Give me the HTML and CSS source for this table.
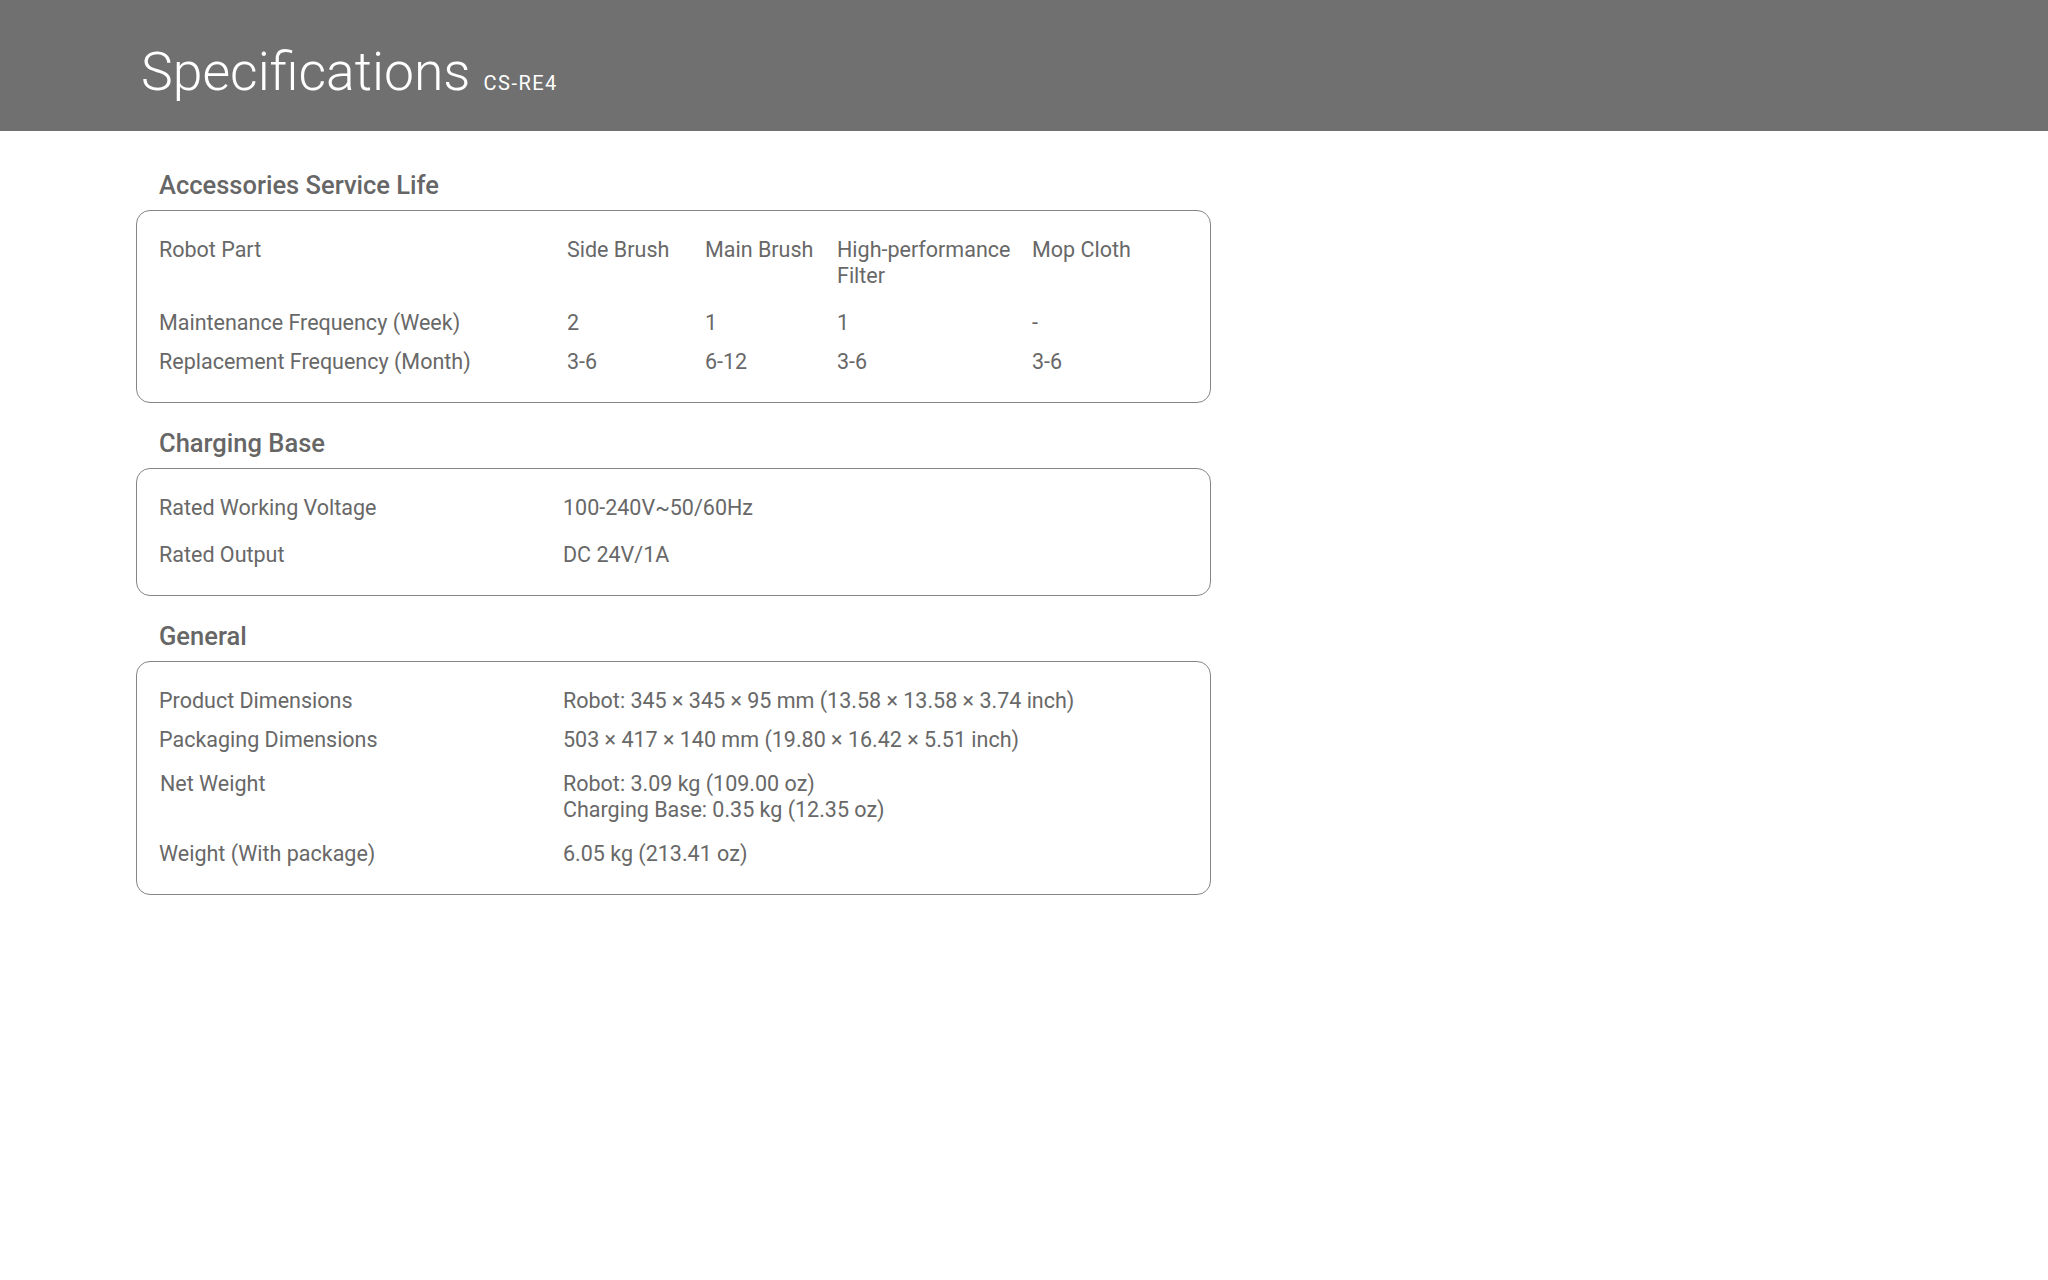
FILE: index.html
```html
<!DOCTYPE html>
<html>
<head>
    <title>Specifications</title>
    <link rel="stylesheet" href="styles.css">
</head>
<body>
    <div class="page-header">
        <h1>Specifications <span class="model">CS-RE4</span></h1>
    </div>
    <div class="container">
        <div class="spec-section">
            <h2>Accessories Service Life</h2>
            <div class="spec-box">
                <div class="life-row">
                    <span>Robot Part</span>
                    <span>Side Brush</span>
                    <span>Main Brush</span>
                    <span>High-performance Filter</span>
                    <span>Mop Cloth</span>
                </div>
                <div class="life-row loose">
                    <span>Maintenance Frequency (Week)</span>
                    <span>2</span>
                    <span>1</span>
                    <span>1</span>
                    <span>-</span>
                </div>
                <div class="life-row tight">
                    <span>Replacement Frequency (Month)</span>
                    <span>3-6</span>
                    <span>6-12</span>
                    <span>3-6</span>
                    <span>3-6</span>
                </div>
            </div>
        </div>

        <div class="spec-section">
            <h2>Charging Base</h2>
            <div class="spec-box">
                <div class="spec-row">
                    <span>Rated Working Voltage</span>
                    <span>100-240V~50/60Hz</span>
                </div>
                <div class="spec-row loose">
                    <span>Rated Output</span>
                    <span>DC 24V/1A</span>
                </div>
            </div>
        </div>

        <div class="spec-section">
            <h2>General</h2>
            <div class="spec-box">
                <div class="spec-row">
                    <span>Product Dimensions</span>
                    <span>Robot: 345 × 345 × 95 mm (13.58 × 13.58 × 3.74 inch)</span>
                </div>
                <div class="spec-row tight">
                    <span>Packaging Dimensions</span>
                    <span>503 × 417 × 140 mm (19.80 × 16.42 × 5.51 inch)</span>
                </div>
                <div class="spec-row">
                    <span class="nudge">Net Weight</span>
                    <span>Robot: 3.09 kg (109.00 oz)<br>Charging Base: 0.35 kg (12.35 oz)</span>
                </div>
                <div class="spec-row">
                    <span>Weight (With package)</span>
                    <span>6.05 kg (213.41 oz)</span>
                </div>
            </div>
        </div>
    </div>
</body>
</html>
```

FILE: styles.css
```css
html,
body {
    margin: 0;
    padding: 0;
}

body {
    background-color: #fff;
    color: #686868;
    font-family: Roboto, "Liberation Sans", sans-serif;
}

.page-header {
    background-color: #707070;
    height: 131px;
    box-sizing: border-box;
    padding: 46px 0 0 141px;
}

.page-header h1 {
    margin: 0;
    color: #fff;
    font-size: 53.5px;
    font-weight: 300;
    line-height: 52px;
}

.page-header .model {
    font-size: 20px;
    font-weight: 400;
    letter-spacing: 1.5px;
}

.container {
    width: 1075px;
    padding: 42px 0 0 136px;
}

.spec-section + .spec-section {
    margin-top: 28px;
}

.spec-section h2 {
    margin: 0 0 12px;
    padding-left: 23px;
    font-size: 25.5px;
    font-weight: 500;
    line-height: 25px;
    color: #666;
}

.spec-box {
    border: 1px solid #858585;
    border-radius: 14px;
    padding: 26px 22px 27px;
    font-size: 21.5px;
    line-height: 26px;
}

.life-row {
    display: grid;
    grid-template-columns: 408px 138px 132px 195px 1fr;
}

.spec-row {
    display: grid;
    grid-template-columns: 404px 1fr;
}

.life-row + .life-row,
.spec-row + .spec-row {
    margin-top: 18px;
}

.life-row.loose,
.spec-row.loose {
    margin-top: 21px;
}

.life-row.tight,
.spec-row.tight {
    margin-top: 13px;
}

.nudge {
    padding-left: 1px;
}
```
